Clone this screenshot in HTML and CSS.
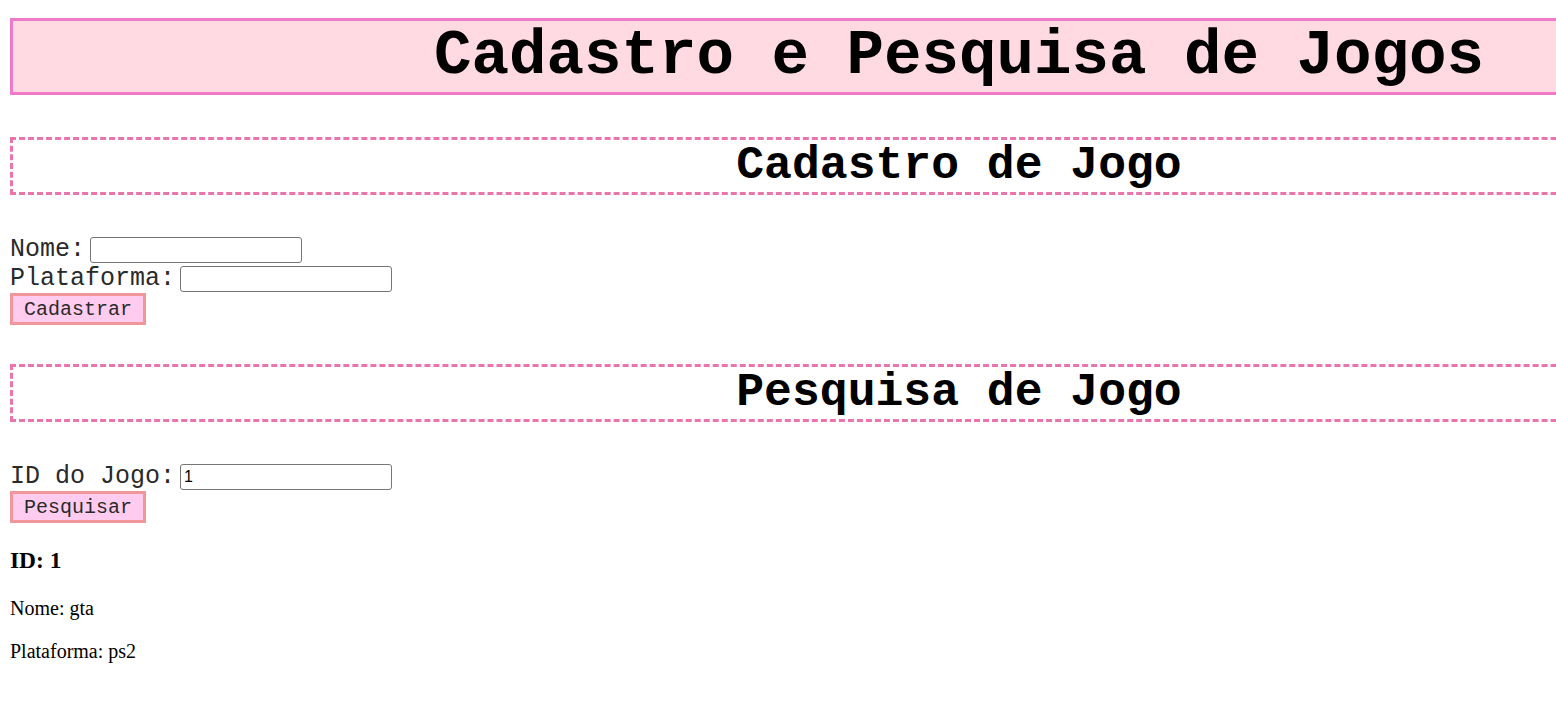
FILE: index.html
```html
<!DOCTYPE html>
<html lang="pt-BR">
<head>
<meta charset="utf-8">
<title>Cadastro e Pesquisa de Jogos</title>
<link rel="stylesheet" href="styles.css">
</head>
<body>
<div class="page">
  <h1 class="banner">Cadastro e Pesquisa de Jogos</h1>

  <h2 class="section-title">Cadastro de Jogo</h2>
  <form class="form">
    <div class="row"><label class="label" for="nome">Nome:</label><input class="field" id="nome" type="text"></div>
    <div class="row"><label class="label" for="plat">Plataforma:</label><input class="field" id="plat" type="text"></div>
    <button class="btn" type="button">Cadastrar</button>
  </form>

  <h2 class="section-title">Pesquisa de Jogo</h2>
  <form class="form">
    <div class="row"><label class="label" for="idjogo">ID do Jogo:</label><input class="field" id="idjogo" type="text" value="1"></div>
    <button class="btn" type="button">Pesquisar</button>
  </form>

  <div class="result">
    <h3 class="result-id">ID: 1</h3>
    <p class="result-line">Nome: gta</p>
    <p class="result-line">Plataforma: ps2</p>
  </div>
</div>
</body>
</html>
```

FILE: styles.css
```css
html, body {
  margin: 0;
  padding: 0;
  overflow: hidden;
  background: #ffffff;
}

.page {
  padding: 18px 0 0 10px;
  font-family: "Liberation Serif", "Times New Roman", serif;
  color: #000;
}

.banner {
  box-sizing: border-box;
  width: 1898px;
  margin: 0;
  border: 3px solid #f07ac8;
  background: #ffdae2;
  font-family: "Liberation Mono", "Courier New", monospace;
  font-weight: bold;
  font-size: 62.5px;
  line-height: 71px;
  text-align: center;
  color: #000;
}

.section-title {
  box-sizing: border-box;
  width: 1898px;
  margin: 42px 0 40px;
  border: 3px dashed #ea74ac;
  font-family: "Liberation Mono", "Courier New", monospace;
  font-weight: bold;
  font-size: 46.4px;
  line-height: 52px;
  text-align: center;
  color: #000;
}

.form + .section-title {
  margin-top: 39px;
}

.form {
  display: flex;
  flex-direction: column;
  align-items: flex-start;
  margin: 0;
}

.row {
  display: flex;
  align-items: center;
  gap: 5px;
  height: 29px;
}

.label {
  font-family: "Liberation Mono", "Courier New", monospace;
  font-size: 25px;
  line-height: 28px;
  color: #2a2a2a;
}

.field {
  box-sizing: border-box;
  width: 212px;
  height: 26px;
  margin: 0;
  padding: 1px 3px;
  border: 1px solid #767676;
  border-radius: 3px;
  font-family: "Liberation Sans", Arial, sans-serif;
  font-size: 16px;
  color: #000;
  background: #fff;
}

.btn {
  box-sizing: border-box;
  height: 32px;
  width: 136px;
  margin: 0;
  padding: 0;
  border: 3px solid #f0979c;
  background: #ffccf0;
  font-family: "Liberation Mono", "Courier New", monospace;
  font-size: 20px;
  color: #2a2a2a;
  text-align: center;
}

.result {
  margin-top: 24px;
}

.result-id {
  margin: 0 0 23px;
  font-size: 23.4px;
  font-weight: bold;
}

.result-line {
  margin: 0 0 20px;
  font-size: 20px;
}
```
